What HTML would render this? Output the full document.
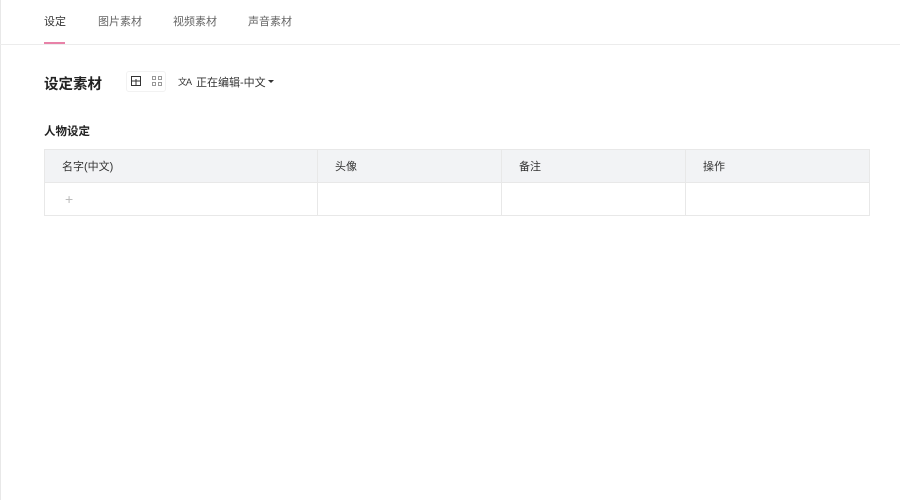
<!DOCTYPE html>
<html><head><meta charset="utf-8"><style>
*{margin:0;padding:0;box-sizing:border-box}
body{width:900px;height:500px;background:#fff;font-family:"Liberation Sans","Noto Sans CJK SC",sans-serif;position:relative;overflow:hidden}
.lb{position:absolute;left:0;top:0;width:1px;height:500px;background:#e8e8e8}
.t{position:absolute;font-size:11px;color:#666;top:13px}
.hd{position:absolute;left:0;right:0;top:44px;border-top:1px solid #ececec}
.ul{position:absolute;left:44px;top:42px;width:21px;height:2px;background:#e882a8}
table{position:absolute;left:44px;top:149px;width:826px;border-collapse:collapse;font-size:11px;color:#333}
td{border:1px solid #e8e8e8;height:33px;padding-left:17px}
tr:first-child td{background:#f2f3f5}
</style></head><body>
<div class="lb"></div>
<div class="t" style="left:44px;color:#333">设定</div>
<div class="t" style="left:98px">图片素材</div>
<div class="t" style="left:173px">视频素材</div>
<div class="t" style="left:248px">声音素材</div>
<div class="ul"></div><div class="hd"></div>
<div style="position:absolute;left:44px;top:73px;font-size:14.5px;font-weight:bold;color:#222">设定素材</div>
<div style="position:absolute;left:126px;top:71px;width:40px;height:21px;border:1px solid #f2f2f2;border-radius:3px"></div>
<svg style="position:absolute;left:131px;top:76px" width="10" height="10"><rect x="0.5" y="0.5" width="9" height="9" fill="none" stroke="#333"/><line x1="0" y1="5" x2="10" y2="5" stroke="#333"/><line x1="5" y1="3" x2="5" y2="10" stroke="#333"/></svg>
<svg style="position:absolute;left:152px;top:76px" width="10" height="10" fill="none" stroke="#999"><rect x="0.5" y="0.5" width="3" height="3"/><rect x="6.5" y="0.5" width="3" height="3"/><rect x="0.5" y="6.5" width="3" height="3"/><rect x="6.5" y="6.5" width="3" height="3"/></svg>
<div style="position:absolute;left:178px;top:75px;font-size:9px;color:#333;letter-spacing:-1px">文A</div>
<div style="position:absolute;left:196px;top:74px;font-size:11px;color:#333">正在编辑-中文</div>
<div style="position:absolute;left:268px;top:80px;border:3px solid transparent;border-top:3px solid #333;border-bottom:0"></div>
<div style="position:absolute;left:44px;top:123px;font-size:11.5px;font-weight:bold;color:#222">人物设定</div>
<table><tr><td style="width:273px">名字(中文)</td><td style="width:184px">头像</td><td style="width:184px">备注</td><td>操作</td></tr>
<tr><td style="color:#bbb;font-size:14px;padding-left:20px">+</td><td></td><td></td><td></td></tr></table>
</body></html>
